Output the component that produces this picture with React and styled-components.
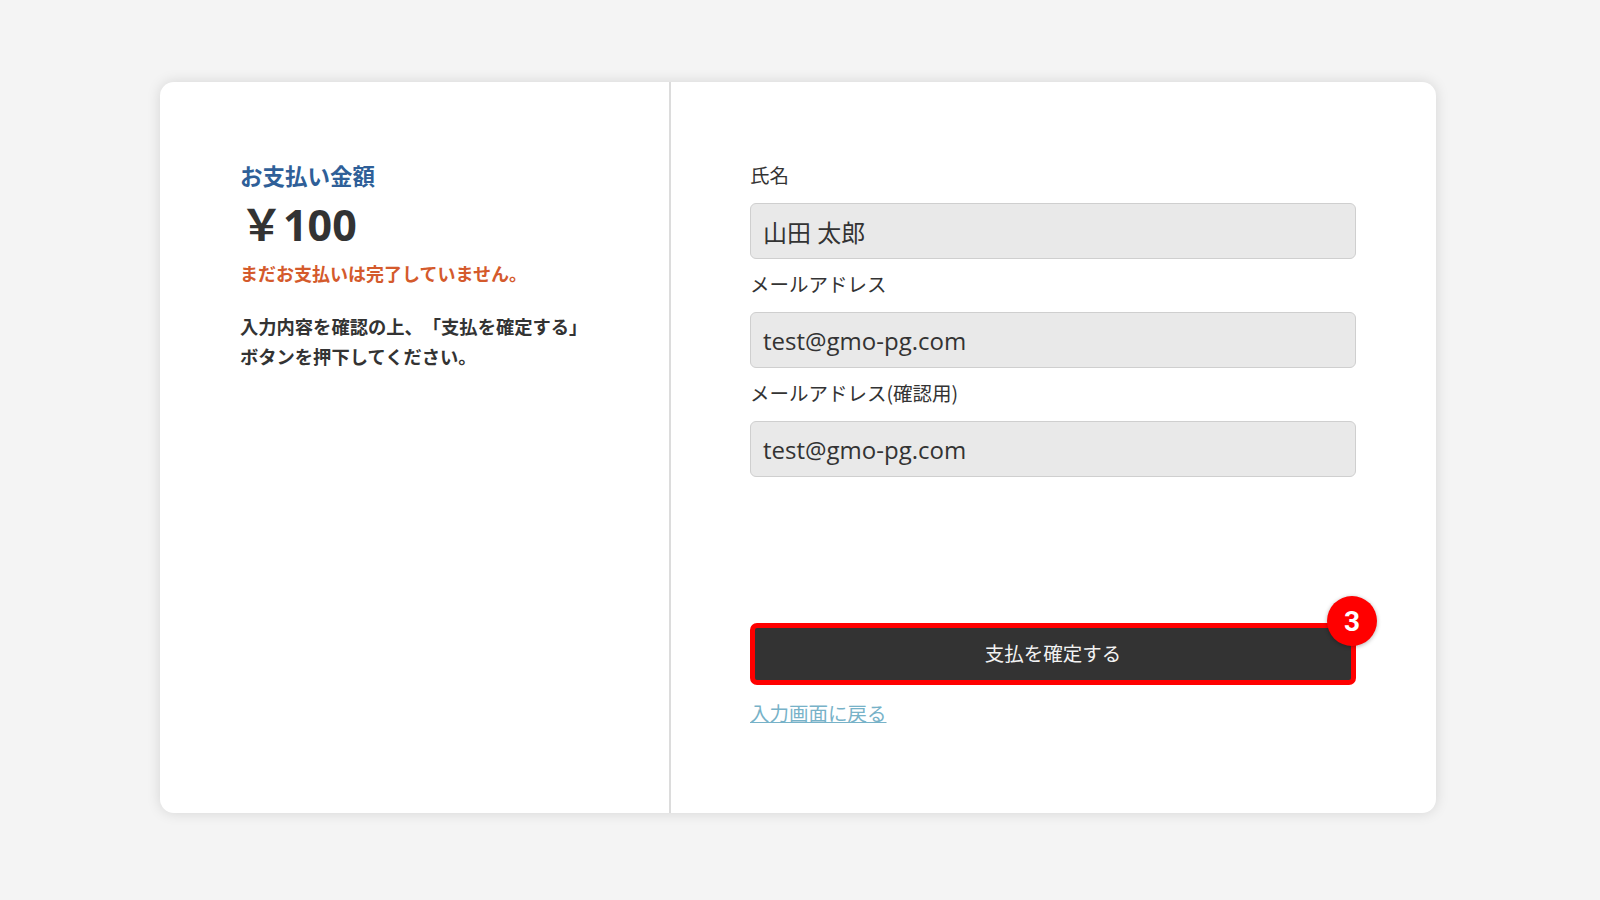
import styled, { createGlobalStyle } from "styled-components"

const Global = createGlobalStyle`
  body {
    margin: 0;
    background: #f4f4f4;
    font-family: "Noto Sans CJK JP", "Noto Sans", sans-serif;
    color: #333;
    text-spacing-trim: space-all;
  }
`

const Page = styled.div`
  padding: 82px 0 0 160px;
  min-height: 900px;
  box-sizing: border-box;
`

const Card = styled.div`
  width: 1276px;
  height: 731px;
  background: #fff;
  border-radius: 14px;
  box-shadow: 0 0 14px rgba(0, 0, 0, 0.13);
  display: grid;
  grid-template-columns: 509px 1fr;
`

const Summary = styled.div`
  padding: 77px 80px;
`

const Title = styled.h2`
  margin: 0;
  font-size: 22.5px;
  line-height: 33px;
  font-weight: 700;
  color: #2f5f98;
`

const Amount = styled.p`
  margin: 0;
  font-family: "Noto Sans", "Noto Sans CJK JP", sans-serif;
  font-size: 43px;
  line-height: 66px;
  font-weight: 700;
  color: #333;
`

const Status = styled.p`
  margin: 0;
  font-size: 18px;
  line-height: 30px;
  font-weight: 700;
  color: #d45a2c;
`

const Note = styled.p`
  margin: 23px 0 0;
  font-size: 18.3px;
  line-height: 30px;
  font-weight: 700;
  color: #333;
`

const Form = styled.div`
  border-left: 2px solid #dcdcdc;
  padding: 78px 80px 0 79px;
  display: flex;
  flex-direction: column;
`

const Label = styled.label`
  font-size: 19.5px;
  line-height: 30px;
  color: #333;
  margin-bottom: 13px;
`

const Field = styled.div`
  height: 56px;
  box-sizing: border-box;
  background: #e9e9e9;
  border: 1px solid #cfcfcf;
  border-radius: 6px;
  padding: 0 12px;
  display: flex;
  align-items: center;
  font-family: "Open Sans", "Noto Sans CJK JP", sans-serif;
  font-size: 24px;
  color: #333;
  margin-bottom: ${props => props.last ? "146px" : "10px"};
`

const ButtonWrap = styled.div`
  position: relative;
`

const Confirm = styled.button`
  width: 100%;
  height: 62px;
  box-sizing: border-box;
  border: 5px solid #f00;
  border-radius: 7px;
  background: #333;
  color: #f2f2f2;
  font-family: "Noto Sans CJK JP", sans-serif;
  font-size: 19.5px;
  padding-bottom: 4px;
  cursor: pointer;
`

const Badge = styled.span`
  position: absolute;
  top: -27px;
  right: -21px;
  width: 50px;
  height: 50px;
  border-radius: 50%;
  background: #f00;
  color: #fff;
  box-shadow: 0 1px 4px rgba(0, 0, 0, 0.3);
  display: flex;
  align-items: center;
  justify-content: center;
  font-family: Roboto, sans-serif;
  font-weight: 700;
  font-size: 28px;
  transform-origin: center;
`

const Back = styled.a`
  margin-top: 13px;
  align-self: flex-start;
  font-size: 19.5px;
  line-height: 30px;
  color: #77b2c8;
  text-decoration: underline;
`

const App = () => {
  return (
    <Page>
      <Global />
      <Card>
        <Summary>
          <Title>お支払い金額</Title>
          <Amount>￥100</Amount>
          <Status>まだお支払いは完了していません。</Status>
          <Note>
            入力内容を確認の上、「支払を確定する」
            <br />
            ボタンを押下してください。
          </Note>
        </Summary>
        <Form>
          <Label>氏名</Label>
          <Field>山田 太郎</Field>
          <Label>メールアドレス</Label>
          <Field>test@gmo-pg.com</Field>
          <Label>メールアドレス(確認用)</Label>
          <Field last>test@gmo-pg.com</Field>
          <ButtonWrap>
            <Confirm>支払を確定する</Confirm>
            <Badge>3</Badge>
          </ButtonWrap>
          <Back href="#">入力画面に戻る</Back>
        </Form>
      </Card>
    </Page>
  )
}

export default App
